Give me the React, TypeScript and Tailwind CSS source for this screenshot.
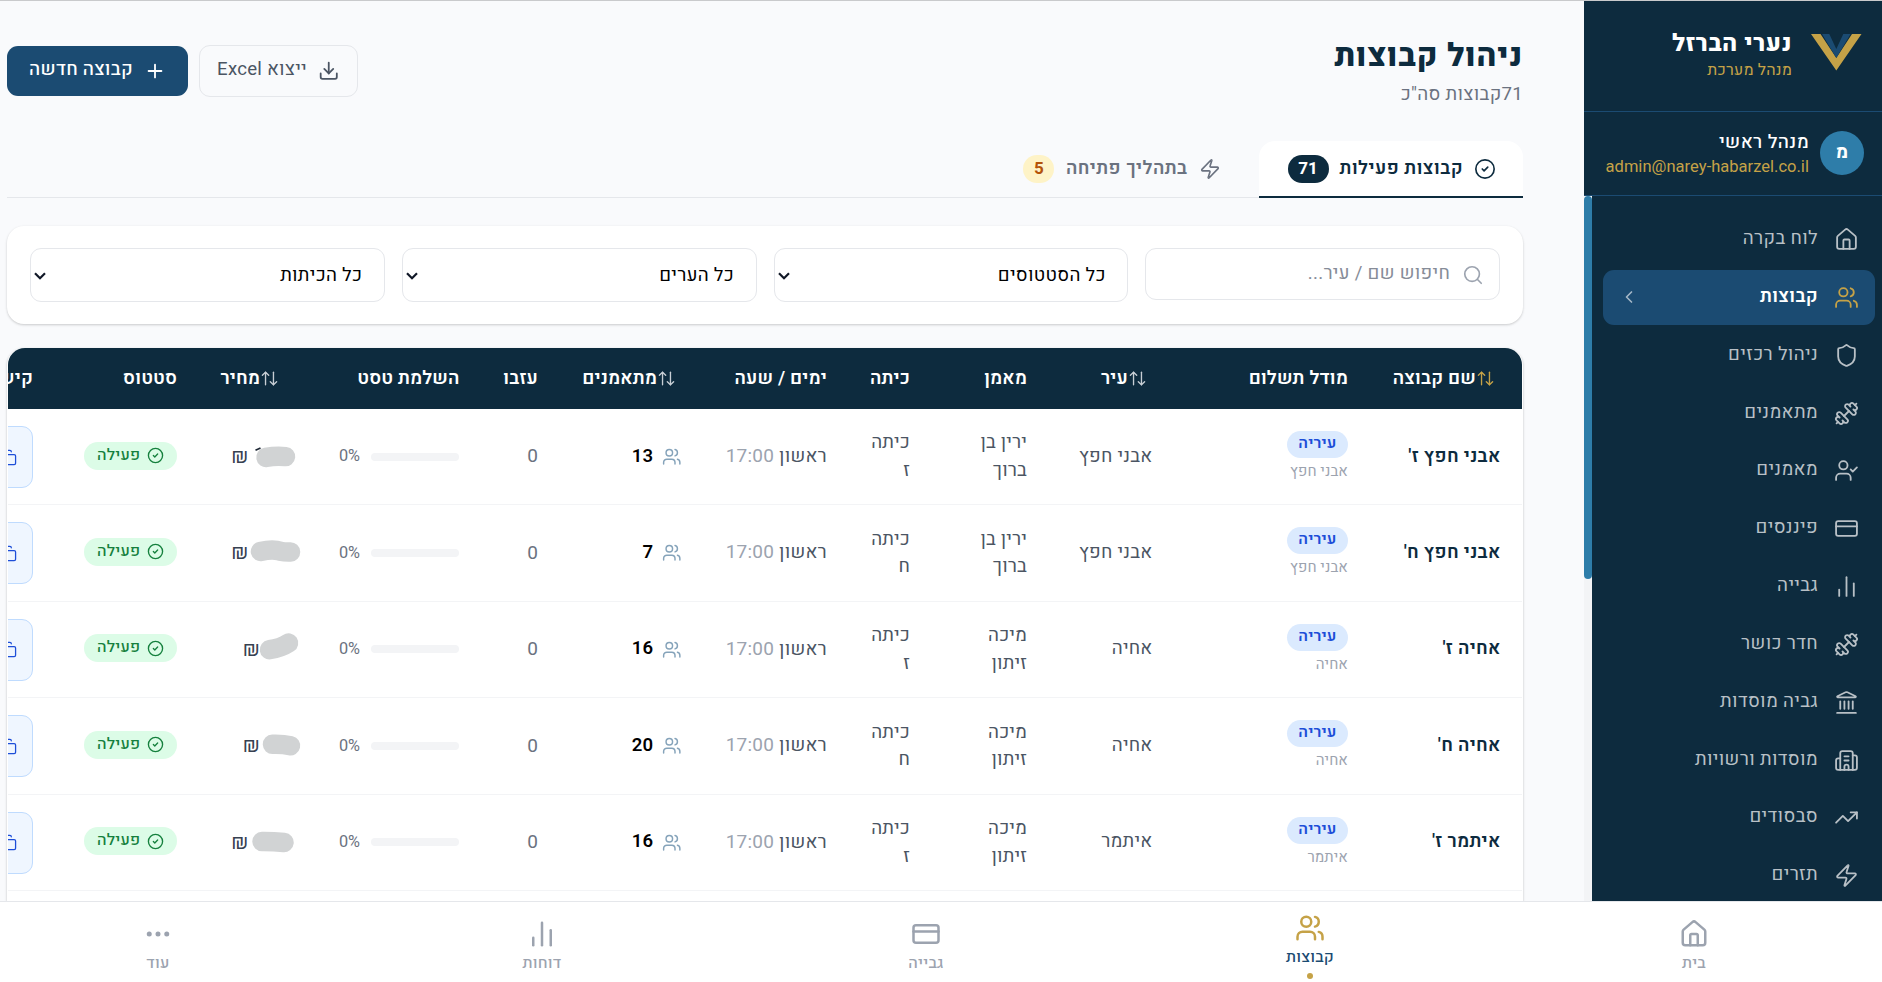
import type { ReactNode } from 'react';
import {
  ArrowUpDown,
  Building2,
  ChartNoAxesColumn,
  ChevronLeft,
  CircleCheck,
  Copy,
  CreditCard,
  Download,
  Dumbbell,
  Ellipsis,
  House,
  Landmark,
  Plus,
  Search,
  Shield,
  TrendingUp,
  UserCheck,
  Users,
  Zap,
} from 'lucide-react';
import type { LucideIcon } from 'lucide-react';

type NavItem = { label: string; icon: LucideIcon; active?: boolean };

const sideItems: NavItem[] = [
  { label: 'לוח בקרה', icon: House },
  { label: 'קבוצות', icon: Users, active: true },
  { label: 'ניהול רכזים', icon: Shield },
  { label: 'מתאמנים', icon: Dumbbell },
  { label: 'מאמנים', icon: UserCheck },
  { label: 'פיננסים', icon: CreditCard },
  { label: 'גבייה', icon: ChartNoAxesColumn },
  { label: 'חדר כושר', icon: Dumbbell },
  { label: 'גביה מוסדות', icon: Landmark },
  { label: 'מוסדות ורשויות', icon: Building2 },
  { label: 'סבסודים', icon: TrendingUp },
  { label: 'תזרים', icon: Zap },
];

const bottomItems: NavItem[] = [
  { label: 'בית', icon: House },
  { label: 'קבוצות', icon: Users, active: true },
  { label: 'גבייה', icon: CreditCard },
  { label: 'דוחות', icon: ChartNoAxesColumn },
  { label: 'עוד', icon: Ellipsis },
];

type Group = {
  name: string;
  city: string;
  coach: [string, string];
  grade: string;
  trainees: number;
  shekel: string;
  mask: string;
  tick?: boolean;
};

// `mask` is the marker stroke over the price, in a 70x40 box centred on the row.
const groups: Group[] = [
  { name: "אבני חפץ ז'", city: 'אבני חפץ', coach: ['ירין בן', 'ברוך'], grade: 'ז', trainees: 13, shekel: 'pr-[36px]', mask: 'M35 20.4Q45 18.6 54.5 19.6', tick: true },
  { name: "אבני חפץ ח'", city: 'אבני חפץ', coach: ['ירין בן', 'ברוך'], grade: 'ח', trainees: 7, shekel: 'pr-[36px]', mask: 'M29.5 18.5Q42 15.5 49 18.2Q54 19.2 59.5 19' },
  { name: "אחיה ז'", city: 'אחיה', coach: ['מיכה', 'זיתון'], grade: 'ז', trainees: 16, shekel: 'pr-[24.5px]', mask: 'M38.5 20.7Q50 19 57.5 14' },
  { name: "אחיה ח'", city: 'אחיה', coach: ['מיכה', 'זיתון'], grade: 'ח', trainees: 20, shekel: 'pr-[24.5px]', mask: 'M41.5 18.3Q52 18 59.5 19.7' },
  { name: "איתמר ז'", city: 'איתמר', coach: ['מיכה', 'זיתון'], grade: 'ז', trainees: 16, shekel: 'pr-[36px]', mask: 'M31 19.5Q42 19.4 53 20.5' },
];

function Logo() {
  return (
    <svg width="51" height="37" viewBox="0 0 51 37" className="shrink-0">
      <path d="M0 0H9.5L25.3 24L41 0H50.5L25.3 36.5Z" fill="#c5a247" />
      <path d="M11 0H18.3L25.3 15L32.3 0H39.6L25.3 24Z" fill="#1b4b72" />
    </svg>
  );
}

function Sidebar() {
  return (
    <aside className="flex w-[298px] shrink-0 flex-col bg-[#0d2b3e]">
      <div className="flex h-[111px] shrink-0 items-start gap-[19px] border-b border-[#1b4b72] pr-[20px] pt-[33px]">
        <Logo />
        <div className="-mt-[6px] text-right">
          <div className="text-[24px] font-extrabold leading-[32px] tracking-[0.55px] text-white">נערי הברזל</div>
          <div className="-mt-px text-[15.9px] leading-[22px] tracking-[0.2px] text-[#c5a247]">מנהל מערכת</div>
        </div>
      </div>
      <div className="flex h-[84px] shrink-0 items-center gap-[11px] border-b border-[#1b4b72] pr-[18px]">
        <div className="-mt-px flex size-[44px] items-center justify-center rounded-full bg-[#2e7da9] text-[18.6px] font-bold text-white">מ</div>
        <div className="text-right">
          <div className="text-[18.6px] font-medium leading-[26px] tracking-[0.4px] text-white">מנהל ראשי</div>
          <div className="text-[16.5px] leading-[22px] text-[#c5a247]">admin@narey-habarzel.co.il</div>
        </div>
      </div>
      <div className="flex min-h-0 flex-1">
        <nav className="flex flex-1 flex-col gap-[2.65px] overflow-hidden pl-[11px] pr-[7px] pt-[16px]">
          {sideItems.map(({ label, icon: Icon, active }) => (
            <div
              key={label}
              className={
                active
                  ? 'flex h-[55.2px] shrink-0 items-center gap-[16px] rounded-[11px] bg-[#1b4b72] px-[16px] font-semibold text-white'
                  : 'flex h-[55.2px] shrink-0 items-center gap-[16px] px-[16px] text-[#b8c0c6]'
              }
            >
              <Icon size={25} strokeWidth={1.75} className={active ? 'text-[#c5a247]' : ''} />
              <span className="-mt-px flex-1 text-[18.6px] tracking-[0.35px]">{label}</span>
              {active && <ChevronLeft size={20} strokeWidth={2} className="text-[#a4b7c7]" />}
            </div>
          ))}
        </nav>
        <div className="w-[8px] shrink-0 bg-[#f3f4f6]">
          <div className="h-[383px] rounded-full bg-[#2e7da9]" />
        </div>
      </div>
    </aside>
  );
}

function PageHeader() {
  return (
    <header className="flex h-[140px] shrink-0 items-start justify-between">
      <div className="pt-[34px]">
        <h1 className="text-[32px] font-extrabold leading-[42px] tracking-[0.7px] text-[#0d2b3e]">ניהול קבוצות</h1>
        <p className="mt-[4px] text-[18.6px] leading-[28px] tracking-[0.3px] text-[#6b7280]">71קבוצות סה"כ</p>
      </div>
      <div className="flex items-center gap-[11px] pt-[44px]">
        <button className="flex h-[52px] w-[159px] items-center gap-[11px] rounded-[11px] border border-[#e5e7eb] px-[17.5px] text-[18.6px] tracking-[0.25px] text-[#4b5563]">
          <Download size={21.5} strokeWidth={2} className="shrink-0" />
          <span className="-mt-[2px] whitespace-nowrap">ייצוא Excel</span>
        </button>
        <button className="flex h-[50px] w-[181px] items-center gap-[11px] rounded-[11px] bg-[#1b4b72] px-[22px] text-[18.6px] font-medium tracking-[0.3px] text-white">
          <Plus size={22} strokeWidth={2} className="shrink-0" />
          <span className="-mt-[2px] whitespace-nowrap">קבוצה חדשה</span>
        </button>
      </div>
    </header>
  );
}

function Tabs() {
  return (
    <div className="flex h-[57px] shrink-0 gap-[11px] border-b border-[#e5e7eb] text-[18.6px] font-semibold">
      <button className="-mb-px flex h-[57px] w-[264px] items-center gap-[11px] rounded-t-[16px] border-b-2 border-[#0d2b3e] bg-white px-[27px] tracking-[0.45px] text-[#0d2b3e]">
        <CircleCheck size={22} strokeWidth={1.8} className="shrink-0" />
        <span className="whitespace-nowrap">קבוצות פעילות</span>
        <span className="flex h-[28px] w-[41px] shrink-0 items-center justify-center rounded-full bg-[#0d2b3e] text-[17px] font-bold tracking-normal text-white">71</span>
      </button>
      <button className="flex h-[56px] items-center gap-[11.5px] px-[27px] tracking-[0.45px] text-[#6b7280]">
        <Zap size={22} strokeWidth={1.8} className="shrink-0" />
        <span className="whitespace-nowrap">בתהליך פתיחה</span>
        <span className="flex h-[28px] w-[31px] shrink-0 items-center justify-center rounded-full bg-[#fef3c7] text-[17px] font-bold tracking-normal text-[#b45309]">5</span>
      </button>
    </div>
  );
}

function SelectBox({ label }: { label: string }) {
  return (
    <div className="flex h-[54px] items-center justify-between rounded-[11px] border border-[#e5e7eb] bg-white pl-[3px] pr-[21.5px] text-[18.6px] tracking-[0.3px] text-black">
      <span className="mt-px">{label}</span>
      <svg width="12" height="8" viewBox="0 0 12 8" fill="none" stroke="#111827" strokeWidth="2.2" className="mt-px">
        <path d="M1 1.2L6 6.2L11 1.2" />
      </svg>
    </div>
  );
}

function Filters() {
  return (
    <section className="mt-[28px] grid h-[98px] shrink-0 grid-cols-4 items-start gap-[17px] rounded-[17px] bg-white px-[23px] pt-[22px] shadow-[0_1px_3px_rgba(0,0,0,0.12),0_1px_2px_rgba(0,0,0,0.08)]">
      <div className="flex h-[52px] items-center gap-[12px] rounded-[11px] border border-[#e5e7eb] px-[15px] text-[18.6px] tracking-[0.3px] text-[#868c98]">
        <Search size={22} strokeWidth={1.8} className="mt-[2px] text-[#9ca3af]" />
        <span className="-mt-px">חיפוש שם / עיר...</span>
      </div>
      <SelectBox label="כל הסטטוסים" />
      <SelectBox label="כל הערים" />
      <SelectBox label="כל הכיתות" />
    </section>
  );
}

function Th({ children, sort }: { children: ReactNode; sort?: string }) {
  return (
    <th className="px-[21px] text-right font-semibold">
      <span className={sort ? 'flex items-center pr-[6px]' : 'flex items-center'}>
        {sort && <ArrowUpDown size={19} strokeWidth={1.7} className={`mt-px ${sort}`} />}
        <span className="mt-px whitespace-nowrap">{children}</span>
      </span>
    </th>
  );
}

function GroupRow({ group }: { group: Group }) {
  return (
    <tr className="h-[96.5px] border-b border-[#f3f4f6] text-[#4b5563] first:h-[95.5px]">
      <td className="whitespace-nowrap px-[21.5px] font-semibold tracking-[0.3px] text-[#0d2b3e]">{group.name}</td>
      <td className="px-[21px] pb-px">
        <div className="flex flex-col items-start">
          <span className="flex h-[27px] w-[61px] items-center justify-center rounded-full bg-[#dbeafe] pb-px text-[15.9px] font-semibold text-[#1d4ed8]">עיריה</span>
          <span className="mt-[3px] text-[14.9px] leading-[20px] tracking-[0.1px] text-[#9ca3af]">{group.city}</span>
        </div>
      </td>
      <td className="whitespace-nowrap px-[21.5px] tracking-[0.25px]">{group.city}</td>
      <td className="whitespace-nowrap px-[21px] pt-px leading-[27.6px]">
        {group.coach[0]}
        <br />
        {group.coach[1]}
      </td>
      <td className="whitespace-nowrap px-[21px] pt-px leading-[27.6px]">
        כיתה
        <br />
        {group.grade}
      </td>
      <td className="whitespace-nowrap px-[21px] tracking-[0.25px]">
        ראשון <span className="text-[19px] text-[#9ca3af]">17:00</span>
      </td>
      <td className="px-[21.5px]">
        <div className="flex items-center gap-[9px]">
          <Users size={19.5} strokeWidth={1.8} className="mt-px text-[#85a3ba]" />
          <span className="font-semibold tracking-normal text-black">{group.trainees}</span>
        </div>
      </td>
      <td className="px-[21px] text-[19px] text-[#6b7280]">0</td>
      <td className="px-[21.5px]">
        <div className="flex items-center gap-[11px]">
          <div className="h-[8px] w-[88px] rounded-full bg-[#f3f4f6]" />
          <span className="text-[16.3px] tracking-normal text-[#6b7280]">0%</span>
        </div>
      </td>
      <td className="px-[21.5px]">
        <div className="relative flex h-[40px] items-center">
          <span className={`${group.shekel} mt-px text-[20px] leading-none text-[#374151]`}>₪</span>
          <svg width="70" height="40" viewBox="0 0 70 40" className="absolute -right-[20px] top-0">
            {group.tick && <path d="M20.5 13.2L25.5 11" stroke="#1f2937" strokeWidth="1.8" />}
            <path d={group.mask} transform="translate(-4 0)" fill="none" stroke="#d1d3d4" strokeWidth="19.5" strokeLinecap="round" strokeLinejoin="round" />
          </svg>
        </div>
      </td>
      <td className="px-[21.5px] pb-[2px]">
        <span className="flex h-[28px] w-[93px] items-center gap-[6px] rounded-full bg-[#dcfce7] pr-[13px] text-[15.9px] font-medium tracking-[0.25px] text-[#15803d]">
          <CircleCheck size={17} strokeWidth={1.9} />
          <span>פעילה</span>
        </span>
      </td>
      <td className="px-[21px] pt-px">
        <div className="flex h-[62px] w-[120px] items-center gap-[6px] rounded-[11px] border border-[#bfdbfe] bg-[#eff6ff] pr-[15px] text-[#1d4ed8]">
          <Copy size={17} strokeWidth={1.8} />
        </div>
      </td>
    </tr>
  );
}

function GroupsTable() {
  return (
    <section className="mt-[24px] min-h-0 flex-1 rounded-t-[17px] bg-white px-px shadow-[0_1px_3px_rgba(0,0,0,0.16),0_1px_2px_rgba(0,0,0,0.1)]">
      <div className="h-full overflow-hidden rounded-t-[17px]">
        <table className="w-[1628px] table-fixed text-[18.6px] tracking-[0.15px]">
          <colgroup>
            <col className="w-[153px]" />
            <col className="w-[195px]" />
            <col className="w-[126px]" />
            <col className="w-[117px]" />
            <col className="w-[83px]" />
            <col className="w-[145px]" />
            <col className="w-[144px]" />
            <col className="w-[78.5px]" />
            <col className="w-[174.5px]" />
            <col className="w-[108px]" />
            <col className="w-[144px]" />
            <col className="w-[160px]" />
          </colgroup>
          <thead>
            <tr className="h-[61px] bg-[#0d2b3e] text-white">
              <Th sort="text-[#c5a247]">שם קבוצה</Th>
              <Th>מודל תשלום</Th>
              <Th sort="text-[#c7ced4]">עיר</Th>
              <Th>מאמן</Th>
              <Th>כיתה</Th>
              <Th>ימים / שעה</Th>
              <Th sort="text-[#c7ced4]">מתאמנים</Th>
              <Th>עזבו</Th>
              <Th>השלמת טסט</Th>
              <Th sort="text-[#c7ced4]">מחיר</Th>
              <Th>סטטוס</Th>
              <Th>קישור</Th>
            </tr>
          </thead>
          <tbody>
            {groups.map((group) => (
              <GroupRow key={group.name} group={group} />
            ))}
          </tbody>
        </table>
      </div>
    </section>
  );
}

function BottomNav() {
  return (
    <nav className="h-[81px] shrink-0 overflow-hidden border-t border-[#e5e7eb] bg-white">
      <div className="-mr-[4px] flex h-full w-[1920px]">
        {bottomItems.map(({ label, icon: Icon, active }) => (
          <div
            key={label}
            className={
              active
                ? 'flex w-[384px] flex-col items-center pt-[11px] text-[#1b4b72]'
                : 'flex w-[384px] flex-col items-center pt-[17px] text-[#9ca3af]'
            }
          >
            <Icon size={30} strokeWidth={2} className={active ? 'text-[#c5a247]' : ''} />
            <span className="mt-[3px] text-[15.9px] font-medium leading-[22px] tracking-[0.2px]">{label}</span>
            {active && <span className="mt-[5px] size-[5.5px] rounded-full bg-[#c5a247]" />}
          </div>
        ))}
      </div>
    </nav>
  );
}

export default function App() {
  return (
    <div dir="rtl" className="flex h-[982px] w-[1882px] flex-col overflow-hidden border-t border-[#c9cacc] bg-[#f9fafc] font-['Heebo',Roboto,sans-serif]">
      <div className="flex min-h-0 flex-1">
        <Sidebar />
        <main className="flex min-w-0 flex-1 flex-col pl-[7px] pr-[61px]">
          <PageHeader />
          <Tabs />
          <Filters />
          <GroupsTable />
        </main>
      </div>
      <BottomNav />
    </div>
  );
}
